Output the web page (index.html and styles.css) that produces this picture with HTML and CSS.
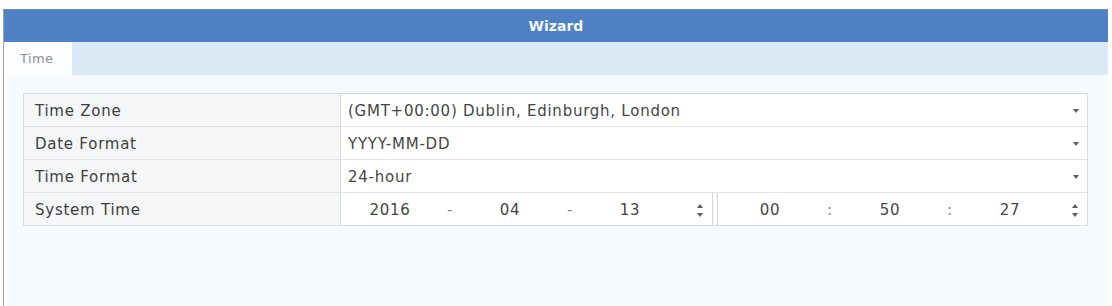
FILE: index.html
```html
<!DOCTYPE html>
<html>
<head>
<meta charset="utf-8">
<link rel="stylesheet" href="styles.css">
</head>
<body>
<div class="dialog">
  <div class="titlebar">Wizard</div>
  <div class="tabbar">
    <div class="tab">Time</div>
  </div>
  <div class="content">
    <div class="table">
      <div class="row">
        <div class="label">Time Zone</div>
        <div class="value select"><span>(GMT+00:00) Dublin, Edinburgh, London</span><i class="caret"></i></div>
      </div>
      <div class="row">
        <div class="label">Date Format</div>
        <div class="value select"><span>YYYY-MM-DD</span><i class="caret"></i></div>
      </div>
      <div class="row">
        <div class="label">Time Format</div>
        <div class="value select"><span>24-hour</span><i class="caret"></i></div>
      </div>
      <div class="row">
        <div class="label">System Time</div>
        <div class="value split">
          <div class="spinbox date">
            <span class="seg">2016</span><span class="seg sep">-</span><span class="seg">04</span><span class="seg sep">-</span><span class="seg">13</span>
            <span class="spin"><i class="up"></i><i class="down"></i></span>
          </div>
          <div class="spinbox time">
            <span class="seg">00</span><span class="seg sep">:</span><span class="seg">50</span><span class="seg sep">:</span><span class="seg">27</span>
            <span class="spin"><i class="up"></i><i class="down"></i></span>
          </div>
        </div>
      </div>
    </div>
  </div>
</div>
</body>
</html>
```

FILE: styles.css
```css
html, body {
  margin: 0;
  padding: 0;
  background: #ffffff;
}
body {
  font-family: "DejaVu Sans", "Open Sans", sans-serif;
  color: #454545;
  width: 1112px;
  height: 306px;
  overflow: hidden;
}
.dialog {
  margin: 9px 4px 0 3px;
  border-left: 1px solid #9fa3a6;
  height: 297px;
  background: #f7fbfe;
  display: flex;
  flex-direction: column;
}
.titlebar {
  height: 33px;
  background: #4f81c5;
  border-top: 1px solid #6d8fbf;
  box-sizing: border-box;
  color: #f4f8fc;
  font-weight: bold;
  font-size: 14px;
  display: flex;
  align-items: center;
  justify-content: center;
}
.tabbar {
  height: 33px;
  background: #dbeaf6;
  display: flex;
}
.tab {
  width: 68px;
  background: #fbfdfe;
  color: #8a9096;
  font-size: 13px;
  letter-spacing: 0.4px;
  display: flex;
  align-items: center;
  padding-left: 16px;
  box-sizing: border-box;
}
.content {
  padding: 18px 19px 0 19px;
}
.table {
  width: 1065px;
  border: 1px solid #d9dcde;
  box-sizing: border-box;
  background: #ffffff;
}
.row {
  display: flex;
  height: 33px;
  border-top: 1px solid #e1e3e5;
  box-sizing: border-box;
}
.row:first-child {
  border-top: none;
  height: 32px;
}
.label {
  width: 317px;
  background: #f5f6f7;
  border-right: 1px solid #dadcde;
  display: flex;
  align-items: center;
  padding-left: 11px;
  padding-top: 2px;
  box-sizing: border-box;
  font-size: 15px;
  letter-spacing: 0.75px;
  color: #404040;
}
.value {
  flex: 1;
  display: flex;
  align-items: center;
  padding-top: 2px;
  box-sizing: border-box;
  font-size: 15px;
  letter-spacing: 0.75px;
  color: #454545;
}
.select {
  padding-left: 7px;
  padding-right: 8px;
  justify-content: space-between;
}
.caret {
  width: 0;
  height: 0;
  border-left: 3.5px solid transparent;
  border-right: 3.5px solid transparent;
  border-top: 4px solid #5c5c5c;
}
.split {
  gap: 4px;
  background: #ffffff;
  align-items: stretch;
  padding-top: 0;
}
.spinbox {
  display: flex;
  align-items: center;
  background: #ffffff;
  padding-top: 2px;
}
.spinbox.date {
  width: 372px;
  border-right: 1px solid #d4d6d8;
  padding-left: 19px;
  box-sizing: border-box;
}
.spinbox.time {
  flex: 1;
  border-left: 1px solid #d4d6d8;
  padding-left: 22px;
  box-sizing: border-box;
}
.seg {
  width: 60px;
  text-align: center;
}
.sep {
  color: #8a8a8a;
}
.spin {
  margin-left: auto;
  margin-right: 9px;
  display: flex;
  flex-direction: column;
  gap: 5px;
}
.up {
  width: 0;
  height: 0;
  border-left: 3.5px solid transparent;
  border-right: 3.5px solid transparent;
  border-bottom: 4px solid #5c5c5c;
}
.down {
  width: 0;
  height: 0;
  border-left: 3.5px solid transparent;
  border-right: 3.5px solid transparent;
  border-top: 4px solid #5c5c5c;
}
```
